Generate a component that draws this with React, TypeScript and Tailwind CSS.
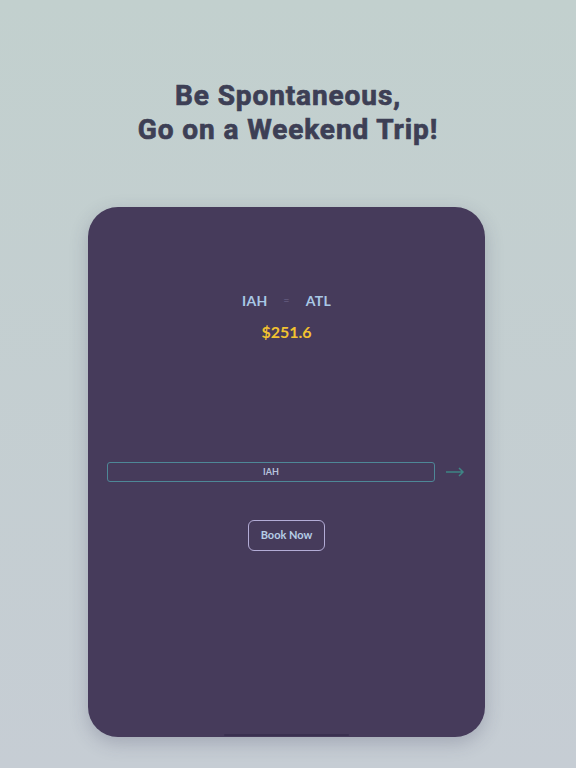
export default function App() {
  return (
    <main className="w-[576px] h-[768px] overflow-hidden flex flex-col items-center bg-gradient-to-b from-[#c2d0ce] to-[#c6cdd4]">
      <h1 className="mt-[79px] text-center text-[28px] leading-[34px] font-bold tracking-[0.9px] text-[#3d3f55] [-webkit-text-stroke:0.7px_#3d3f55] [font-family:Roboto,sans-serif]">
        Be Spontaneous,
        <br />
        Go on a Weekend Trip!
      </h1>

      <section className="mt-[60px] mr-[3px] w-[397px] h-[530px] rounded-[30px] bg-[#463b5b] shadow-[0_6px_18px_rgba(60,60,90,0.25)] flex flex-col items-center [font-family:Lato,sans-serif]">
        <div className="mt-[83px] flex items-center gap-[16px] text-[14px] font-bold tracking-[0.3px] text-[#a9c8e6]">
          <span>IAH</span>
          <span className="text-[10px] text-[#5e5578]">=</span>
          <span>ATL</span>
        </div>
        <div className="mt-[9px] text-[16px] font-bold text-[#f2c230]">$251.6</div>

        <div className="mt-[118px] w-full pl-[19px] pr-[20px] flex items-center gap-[11px]">
          <div className="flex-1 h-[20px] rounded-[3px] border border-[#4e8797] flex items-center justify-center text-[9px] font-bold text-[#b7c3dc]">
            IAH
          </div>
          <svg width="19" height="10" viewBox="0 0 19 10" fill="none" stroke="#3e8585" strokeWidth="1.5">
            <path d="M0 5h17M13 1l4 4-4 4" />
          </svg>
        </div>

        <button className="mt-[38px] w-[77px] h-[31px] rounded-[6px] border border-[#b3acd6] text-[11px] font-bold text-[#b5cde6]">
          Book Now
        </button>

        <div className="mt-auto mb-[1px] w-[125px] h-[2px] rounded-full bg-[#3a3050]" />
      </section>
    </main>
  );
}
